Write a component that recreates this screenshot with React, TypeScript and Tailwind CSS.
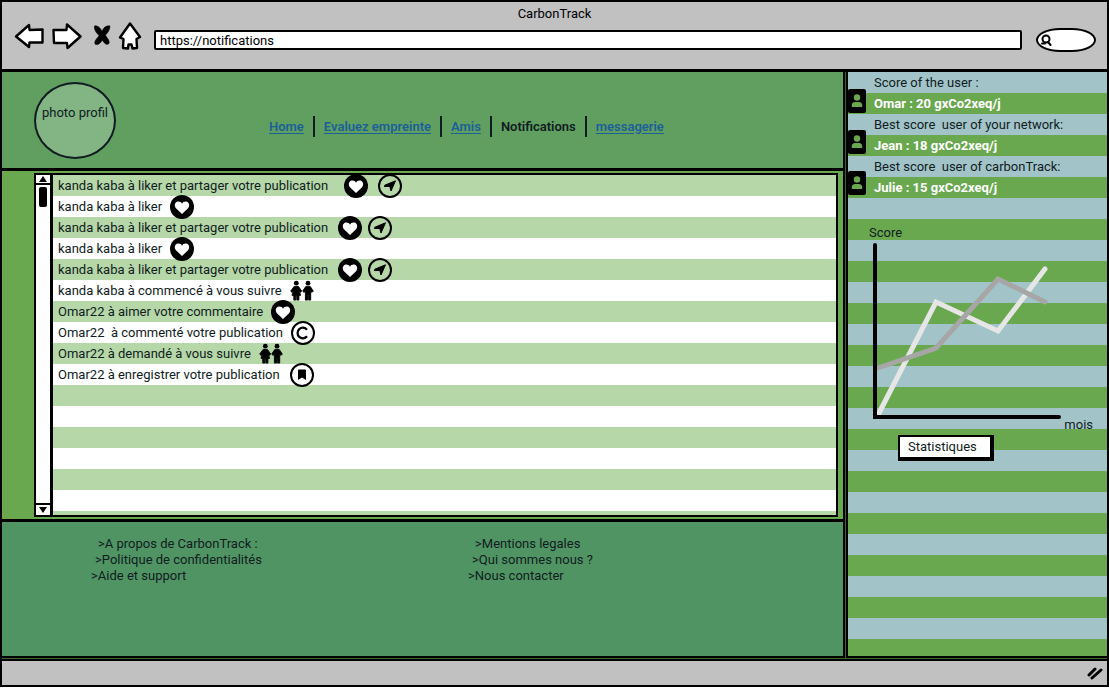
import React from "react";

type Kind = "heart" | "send" | "couple" | "comment" | "bookmark";

interface Notice {
  text: string;
  icons: Kind[];
  spacing: string;
}

const notices: Notice[] = [
  { text: "kanda kaba à liker et partager votre publication", icons: ["heart", "send"], spacing: "ml-4 gap-2.5" },
  { text: "kanda kaba à liker", icons: ["heart"], spacing: "ml-2" },
  { text: "kanda kaba à liker et partager votre publication", icons: ["heart", "send"], spacing: "ml-2.5 gap-1.5" },
  { text: "kanda kaba à liker", icons: ["heart"], spacing: "ml-2" },
  { text: "kanda kaba à liker et partager votre publication", icons: ["heart", "send"], spacing: "ml-2.5 gap-1.5" },
  { text: "kanda kaba à commencé à vous suivre", icons: ["couple"], spacing: "ml-2" },
  { text: "Omar22 à aimer votre commentaire", icons: ["heart"], spacing: "ml-2" },
  { text: "Omar22  à commenté votre publication", icons: ["comment"], spacing: "ml-2" },
  { text: "Omar22 à demandé à vous suivre", icons: ["couple"], spacing: "ml-2" },
  { text: "Omar22 à enregistrer votre publication", icons: ["bookmark"], spacing: "ml-2.5" },
];

const scores = [
  { label: "Score of the user :", value: "Omar : 20 gxCo2xeq/j" },
  { label: "Best score  user of your network:", value: "Jean : 18 gxCo2xeq/j" },
  { label: "Best score  user of carbonTrack:", value: "Julie : 15 gxCo2xeq/j" },
];

const navItems = ["Home", "Evaluez empreinte", "Amis", "Notifications", "messagerie"];

const footerLinks = [
  ["A propos de CarbonTrack :", "Politique de confidentialités", "Aide et support"],
  ["Mentions legales", "Qui sommes nous ?", "Nous contacter"],
];

const footerIndents = ["pl-[7px]", "pl-1", "pl-0"];

function NoticeIcon({ kind }: { kind: Kind }) {
  const ring = <circle cx="12" cy="12" r="11" fill="white" stroke="black" strokeWidth="2" />;
  return (
    <svg viewBox="0 0 24 24" className="size-6 shrink-0" aria-hidden="true">
      {kind === "heart" && (
        <>
          <circle cx="12" cy="12" r="12" />
          <path
            d="M12 19 L6.2 13.5 C3.8 11 4.6 7 7.9 6.6 C9.8 6.4 11.3 7.3 12 8.7 C12.7 7.3 14.2 6.4 16.1 6.6 C19.4 7 20.2 11 17.8 13.5 Z"
            fill="white"
          />
        </>
      )}
      {kind === "send" && (
        <>
          <circle cx="12" cy="12" r="11" fill="none" stroke="black" strokeWidth="2" />
          <path d="M17.5 6.8 L13 17 L11.8 12.4 L6.4 12.6 L6.8 11.2 Z" stroke="black" strokeLinejoin="round" />
        </>
      )}
      {kind === "comment" && (
        <>
          {ring}
          <path d="M16 8.7 A5.3 5.3 0 1 0 16 15.3" fill="none" stroke="black" strokeWidth="2.2" />
        </>
      )}
      {kind === "bookmark" && (
        <>
          {ring}
          <path d="M8 7.6 Q8 6.6 9 6.6 H15 Q16 6.6 16 7.6 V17 L12 14.5 L8 17 Z" />
        </>
      )}
      {kind === "couple" && (
        <>
          <circle cx="6.3" cy="4.2" r="2.4" />
          <path
            d="M4.2 7.4 H8.4 L11.7 12.1 L10.5 13.4 L9.4 12.2 L10.6 16.4 H8.9 V21.1 H6.8 V16.6 H5.8 V21.1 H3.8 V16.4 H2 L3.2 12.2 L2.1 13.4 L0.7 12.1 Z"
            stroke="black"
            strokeWidth=".9"
            strokeLinejoin="round"
          />
          <circle cx="18" cy="4.2" r="2.4" />
          <path
            d="M15.8 7.4 H20.2 L23.3 12.1 L22 13.4 L20.7 12.1 V21.1 H18.6 V16.6 H17.5 V21.1 H15.4 V12.1 L14 13.4 L12.7 12.1 Z"
            stroke="black"
            strokeWidth=".9"
            strokeLinejoin="round"
          />
        </>
      )}
    </svg>
  );
}

function BrowserBar() {
  const sketch = { fill: "white", stroke: "black", strokeWidth: 2.4, strokeLinejoin: "round" as const };
  return (
    <header className="h-[70px] border-b-3 border-black pt-0.5 text-black">
      <h1 className="text-center leading-5">CarbonTrack</h1>
      <div className="flex items-center pt-1 pr-[11px] pl-3">
        <button aria-label="Back" className="mr-2 -mt-2">
          <svg viewBox="0 0 30 28" className="h-7 w-[30px]">
            <path d="M2 14.5 L15 3 L15.5 8 L28.5 7.5 L28.5 20.5 L15.5 20.5 L15 25 Z" {...sketch} />
          </svg>
        </button>
        <button aria-label="Forward" className="mr-2.5 -mt-2">
          <svg viewBox="0 0 30 28" className="h-7 w-[30px]">
            <path d="M1.5 8 L14.5 8 L15 2.5 L28.5 14.5 L15.5 26 L15 21 L2 21 Z" {...sketch} />
          </svg>
        </button>
        <button aria-label="Stop" className="mr-1.5 -mt-2">
          <svg viewBox="0 0 20 28" className="h-7 w-5">
            <path
              d="M2.500 4 C6 3 9 7 10 9.500 C11 6.500 14 3 18 4 C18 8 15.500 11 13.500 13 C14.500 16 18 18 17 21.500 C14 24 12 20.500 10.300 18 C9 20.500 6 24 3 22 C2 18.500 5.500 16.500 7 13.500 C4.500 11 2 8 2.500 4 Z"
              stroke="black"
              strokeWidth=".6"
            />
          </svg>
        </button>
        <button aria-label="Home page" className="mr-3 -mt-2">
          <svg viewBox="0 0 24 28" className="h-7 w-6">
            <path
              d="M12 1.5 L22 15 L18.5 17 L19 26 L14.5 26.5 L13.5 22.5 L10.5 22.5 L10 26.5 L5 26 L5.5 17 L2 15.5 Z"
              {...sketch}
            />
          </svg>
        </button>
        <input
          aria-label="Address"
          defaultValue="https://notifications"
          className="h-5 min-w-0 flex-1 rounded-xs border-2 border-black bg-white px-1 outline-none"
        />
        <label className="ml-3.5 flex h-6 w-[60px] items-center rounded-[24px/12px] border-2 border-black bg-white pl-0.5">
          <svg viewBox="0 0 12 12" className="size-3 shrink-0" fill="none" stroke="black" strokeWidth="2" strokeLinecap="round">
            <circle cx="6" cy="5" r="3.5" />
            <path d="M2 9.5 H5 M8 8 L10.5 11" />
          </svg>
          <input aria-label="Search" className="w-8 bg-transparent outline-none" />
        </label>
      </div>
    </header>
  );
}

function ProfileHeader() {
  return (
    <div className="flex min-h-[99px] items-center border-b-3 border-black bg-[#619f60] pl-8">
      <div className="flex h-[77px] w-[82px] justify-center rounded-[50%] border-2 border-[#101c22] bg-[#82b484] pt-[18px] whitespace-nowrap">
        photo profil
      </div>
      <nav className="mt-3 ml-[144px] flex font-semibold">
        {navItems.map((item, i) => (
          <React.Fragment key={item}>
            {i > 0 && <span className="border-l-2 border-[#101c22]" />}
            <a
              href="#"
              className={
                item === "Notifications"
                  ? "px-[9px]"
                  : "px-[9px] text-[#1b5f99] underline underline-offset-2"
              }
            >
              {item}
            </a>
          </React.Fragment>
        ))}
      </nav>
    </div>
  );
}

function NoticeList() {
  return (
    <section className="flex flex-1 bg-[#6aa84f] pt-0.5 pr-[5px] pb-0.5 pl-8">
      <div className="flex w-4 flex-col items-center border-2 border-r-0 border-black bg-white">
        <button aria-label="Scroll up" className="flex h-2.5 w-full items-center justify-center border-b-2 border-black">
          <svg viewBox="0 0 8 6" className="h-1.5 w-2">
            <path d="M4 0 L8 6 H0 Z" />
          </svg>
        </button>
        <div className="mt-0.5 h-5 w-2 rounded-xs bg-black" />
        <button aria-label="Scroll down" className="mt-auto flex h-3 w-full items-center justify-center border-t-2 border-black">
          <svg viewBox="0 0 8 6" className="h-1.5 w-2">
            <path d="M4 6 L8 0 H0 Z" />
          </svg>
        </button>
      </div>
      <ul className="flex-1 border-2 border-l-3 border-black bg-[repeating-linear-gradient(#b6d7a8_0_21px,white_21px_42px)] pl-[5px]">
        {notices.map((notice, i) => (
          <li key={i} className="flex h-[21px] items-center">
            <span className="whitespace-pre">{notice.text}</span>
            <span className={`flex ${notice.spacing}`}>
              {notice.icons.map((kind) => (
                <NoticeIcon key={kind} kind={kind} />
              ))}
            </span>
          </li>
        ))}
      </ul>
    </section>
  );
}

function FooterLinks() {
  return (
    <footer className="grid min-h-[139px] grid-cols-[377px_1fr] border-t-3 border-b-2 border-black bg-[#519463] pt-3.5 pl-[89px] leading-4">
      {footerLinks.map((column) => (
        <ul key={column[0]}>
          {column.map((label, i) => (
            <li key={label} className={footerIndents[i]}>
              <a href="#">&gt;{label}</a>
            </li>
          ))}
        </ul>
      ))}
    </footer>
  );
}

function ScorePanel() {
  return (
    <aside className="w-[261px] border-b-2 border-l-2 border-black bg-[repeating-linear-gradient(#a2c4c9_0_21px,#6aa84f_21px_42px)]">
      <div className="flex">
        <div className="flex flex-col gap-[17px] pt-[17px]">
          {scores.map((score) => (
            <svg key={score.value} viewBox="0 0 18 24" className="h-6 w-[18px]" aria-hidden="true">
              <rect width="18" height="24" rx="2" />
              <circle cx="9" cy="8.5" r="3.2" fill="#6aa84f" />
              <path d="M3.8 18 V16 C3.8 13.5 6 13 9 13 C12 13 14.2 13.5 14.2 16 V18 Z" fill="#6aa84f" />
            </svg>
          ))}
        </div>
        <dl className="pl-2 whitespace-pre">
          {scores.map((score) => (
            <React.Fragment key={score.value}>
              <dt>{score.label}</dt>
              <dd className="font-bold text-white">{score.value}</dd>
            </React.Fragment>
          ))}
        </dl>
      </div>
      <div className="pt-6 pl-[21px]">
        <h2>Score</h2>
        <svg viewBox="0 0 195 176" className="h-44 w-[195px]" fill="none" strokeWidth="5" role="img" aria-label="Score par mois">
          <path d="M9 172 L67 59 L129 88 L176 26" stroke="#e6e6e6" strokeLinecap="round" />
          <path d="M9 125 L67 105 L129 36 L176 59" stroke="#a6a6a6" strokeLinecap="round" />
          <path d="M6 2 V174 H190" stroke="black" strokeWidth="4" strokeLinecap="round" />
        </svg>
        <p className="pr-3.5 text-right leading-3">mois</p>
        <button className="mt-1 ml-[29px] flex h-[26px] w-24 items-center border-2 border-r-4 border-b-4 border-black bg-white pl-2 leading-4">
          Statistiques
        </button>
      </div>
    </aside>
  );
}

export default function App() {
  return (
    <div className="flex min-h-screen flex-col bg-white pb-0.5 font-[Roboto,sans-serif] text-[13px] leading-[21px] text-[#101c22]">
      <div className="flex flex-1 flex-col border-2 border-black bg-[#c1c1c1]">
        <BrowserBar />
        <main className="flex flex-1 gap-px bg-[#38662b] pb-px">
          <div className="flex flex-1 flex-col border-r-2 border-black">
            <ProfileHeader />
            <NoticeList />
            <FooterLinks />
          </div>
          <ScorePanel />
        </main>
        <div className="flex h-[26px] items-center justify-end border-t-2 border-black pr-1">
          <svg viewBox="0 0 16 14" className="h-3.5 w-4" fill="none" stroke="black" strokeWidth="3" strokeLinecap="round">
            <path d="M2 9 L8 3 M5 12 L14 4" />
          </svg>
        </div>
      </div>
    </div>
  );
}
